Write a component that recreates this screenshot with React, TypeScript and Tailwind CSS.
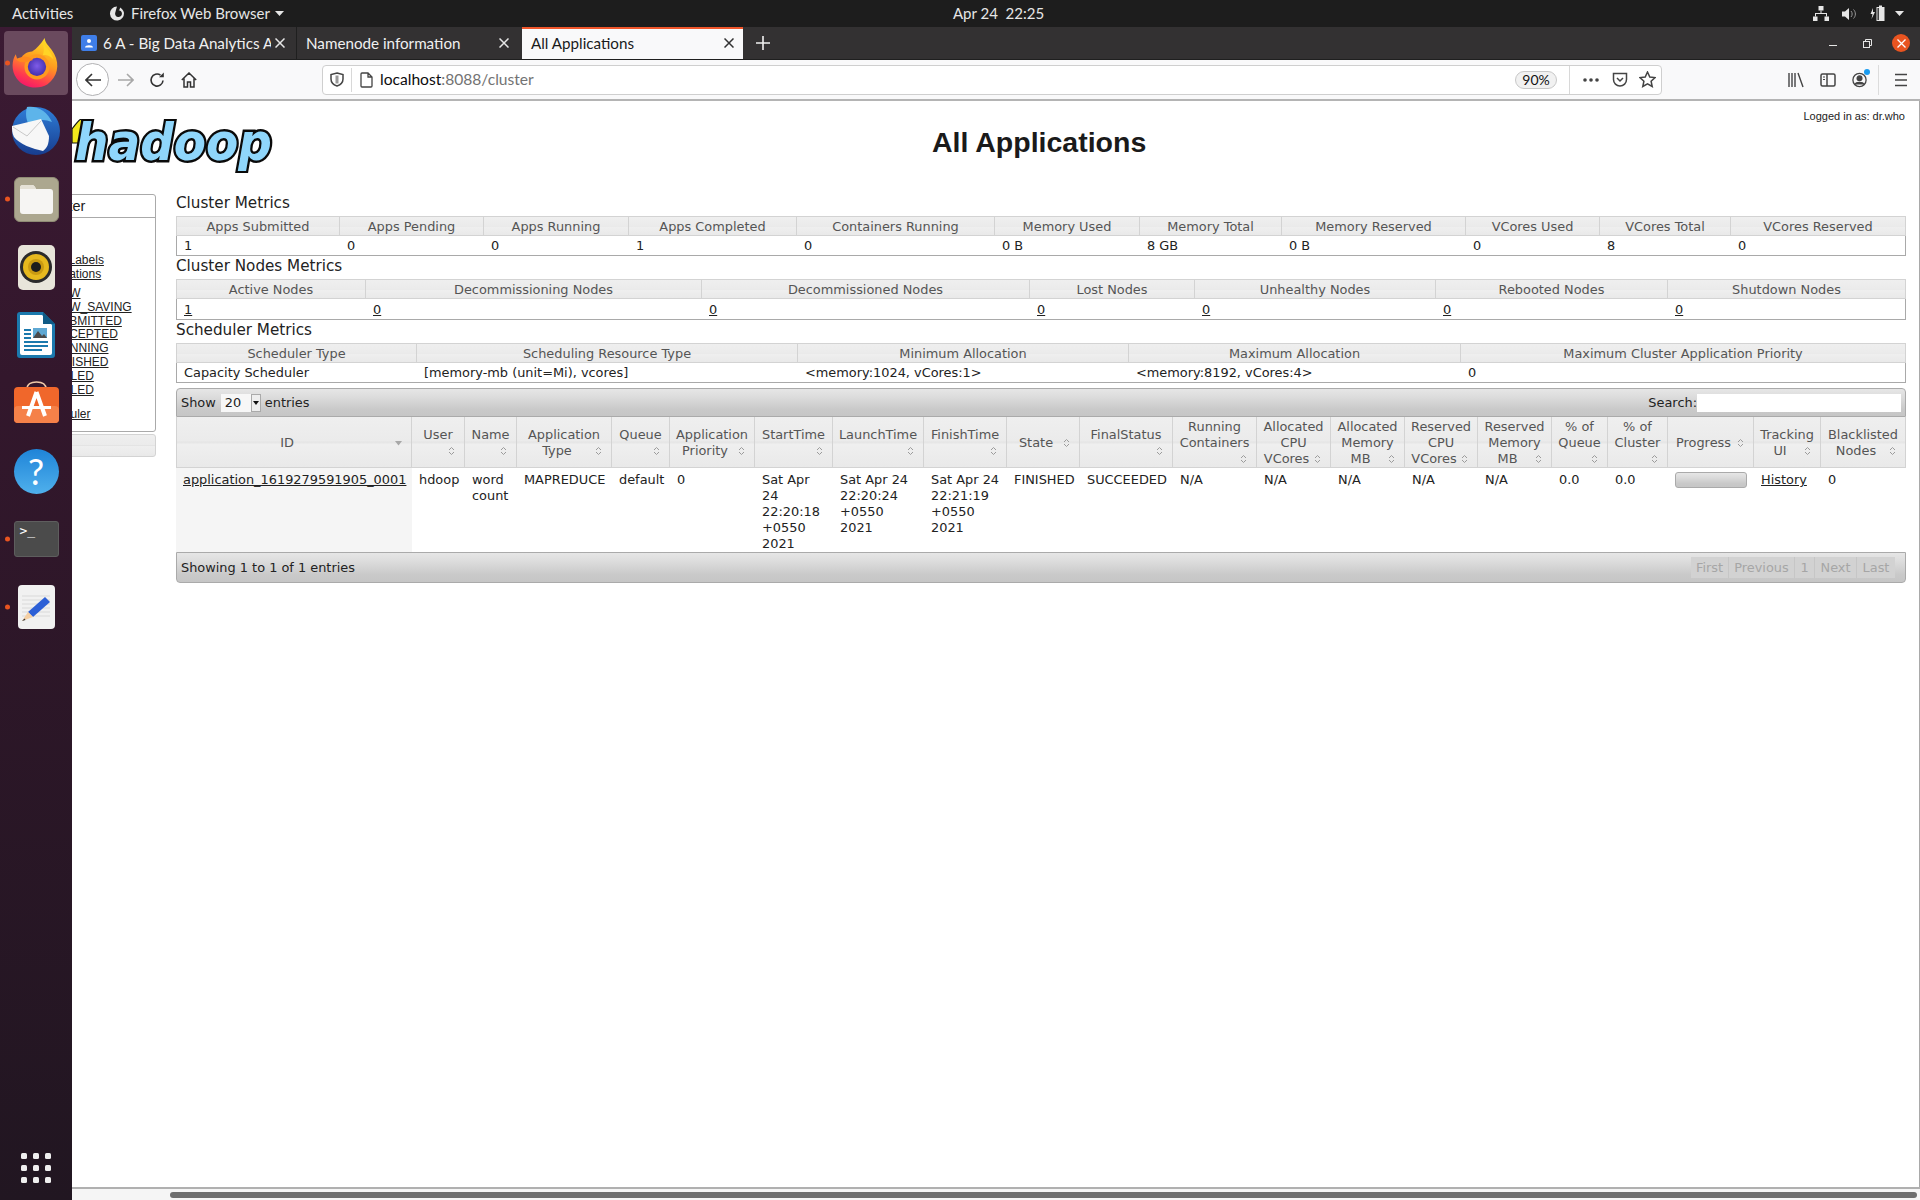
import React from "react";

const UI = "font-['Lato','Noto_Sans',sans-serif]";
const DJ = "font-['DejaVu_Sans',sans-serif]";
const LS = "font-['Liberation_Sans',Arial,sans-serif]";

const thBg = "bg-[linear-gradient(#efefef_0%,#ebebeb_48%,#e4e4e4_50%,#efefef_55%,#e9e9e9_100%)]";
const barBg = "bg-[linear-gradient(#e6e6e6_0%,#dcdcdc_30%,#c9c9c9_75%,#c6c6c6_100%)]";

function Sort() {
  return (
    <svg width="7" height="10" viewBox="0 0 7 10" className="block" fill="none" stroke="#9b9b9b" strokeWidth="1">
      <path d="M1 4 L3.5 1.5 L6 4" />
      <path d="M1 6 L3.5 8.5 L6 6" />
    </svg>
  );
}

function FirefoxIcon({ size = 56 }: { size?: number }) {
  return (
    <svg width={size} height={size} viewBox="0 0 56 56">
      <defs>
        <linearGradient id="ffa" x1="0.7" y1="0" x2="0.3" y2="1">
          <stop offset="0" stopColor="#ffe226" />
          <stop offset="0.45" stopColor="#ff9a1f" />
          <stop offset="0.8" stopColor="#ff3a4f" />
          <stop offset="1" stopColor="#f5156c" />
        </linearGradient>
        <radialGradient id="ffb" cx="0.5" cy="0.45" r="0.6">
          <stop offset="0" stopColor="#7f5ce8" />
          <stop offset="1" stopColor="#3f2ba8" />
        </radialGradient>
      </defs>
      <path d="M37 2 C37 8 44 12 47 19 C53 30 50 43 40 50 C30 56 15 54 8 44 C2 36 3 25 7 19 C8 23 9 25 11 26 C13 20 18 16 24 16 C29 13 33 8 37 2Z" fill="url(#ffa)" />
      <circle cx="29" cy="32" r="13" fill="#ff9a1f" />
      <circle cx="29" cy="32" r="9.5" fill="url(#ffb)" />
      <path d="M7 24 C13 21 20 20 25 25 C20 26 17 28 15 27 C12 27 9 26 7 24Z" fill="#ff8a1f" />
      <path d="M35 7 C38 12 44 16 46 24 C42 20 38 19 35 20 C37 15 36 11 35 7Z" fill="#ffd426" />
    </svg>
  );
}

function Thunderbird() {
  return (
    <svg width="50" height="50" viewBox="0 0 50 50">
      <defs>
        <linearGradient id="tb" x1="0" y1="0" x2="0" y2="1">
          <stop offset="0" stopColor="#2f7ed8" />
          <stop offset="1" stopColor="#173d8f" />
        </linearGradient>
      </defs>
      <circle cx="25" cy="25" r="24" fill="url(#tb)" />
      <path d="M16 1 C26 -1 37 6 41 16 C32 12 23 14 19 20 C15 15 14 8 16 1Z" fill="#5db4ea" />
      <path d="M1 20 L30 13 L38 30 C38 38 36 42 32 45 C22 43 8 38 3 31 C1 27 1 24 1 20Z" fill="#f7f7f7" />
      <path d="M2 21 L16 30 L30 15" fill="none" stroke="#c9c9c9" strokeWidth="1" />
    </svg>
  );
}

function Files() {
  return (
    <div className="w-[45px] h-[45px] rounded-[6px] bg-[#aca78f] border border-[#8f8b75] flex items-center justify-center">
      <svg width="33" height="29" viewBox="0 0 33 29">
        <path d="M0 3 Q0 0 3 0 H12 Q14 0 15 2 L16 4 H30 Q33 4 33 7 V26 Q33 29 30 29 H3 Q0 29 0 26Z" fill="#f6f5f3" />
        <path d="M0 3 Q0 0 3 0 H12 Q14 0 15 2 L16 4 H0Z" fill="#e5e1d6" />
      </svg>
    </div>
  );
}

function Rhythmbox() {
  return (
    <div className="w-[37px] h-[45px] rounded-[5px] bg-[#e8e5da] flex items-center justify-center">
      <svg width="32" height="32" viewBox="0 0 32 32">
        <circle cx="16" cy="16" r="16" fill="#2b2b2b" />
        <circle cx="16" cy="16" r="13" fill="#e6b91e" />
        <circle cx="16" cy="16" r="8" fill="#c99a12" />
        <circle cx="16" cy="16" r="5" fill="#1d1d1d" />
      </svg>
    </div>
  );
}

function Writer() {
  return (
    <svg width="38" height="46" viewBox="0 0 38 46">
      <path d="M3 0 H26 L38 12 V43 Q38 46 35 46 H3 Q0 46 0 43 V3 Q0 0 3 0Z" fill="#1b79ad" />
      <path d="M3 3 H25 L35 13 V41 Q35 43 33 43 H5 Q3 43 3 41Z" fill="#fff" />
      <path d="M26 0 L38 12 H26Z" fill="#0f5a85" />
      <rect x="7" y="17" width="7" height="2" fill="#1b79ad" />
      <rect x="7" y="21" width="7" height="2" fill="#1b79ad" />
      <rect x="7" y="25" width="7" height="2" fill="#1b79ad" />
      <rect x="16" y="16" width="14" height="10" fill="#5fa8d3" />
      <path d="M16 26 L21 19 L25 24 L27 22 L30 26Z" fill="#4a4a4a" />
      <rect x="7" y="29" width="24" height="2" fill="#1b79ad" />
      <rect x="7" y="33" width="24" height="2" fill="#1b79ad" />
      <rect x="7" y="37" width="18" height="2" fill="#1b79ad" />
    </svg>
  );
}

function Software() {
  return (
    <svg width="45" height="42" viewBox="0 0 45 42" className="block mb-[3px]">
      <path d="M13 8 C13 3 17 1 22.5 1 C28 1 32 3 32 8" fill="none" stroke="#f0c9a8" strokeWidth="1.6" />
      <rect x="0" y="6" width="45" height="36" rx="4" fill="#f0672b" />
      <rect x="0" y="25" width="45" height="17" rx="4" fill="#f58149" />
      <path d="M22.5 11 L14 35 M22.5 11 L31 35" stroke="#fff" strokeWidth="4" fill="none" />
      <rect x="8" y="25" width="29" height="3" fill="#fff" />
    </svg>
  );
}

function Editor() {
  return (
    <div className="w-[37px] h-[44px] rounded-[4px] bg-[#f1f1f1] flex items-center justify-center">
      <svg width="30" height="32" viewBox="0 0 30 32">
        <path d="M1 5H29M1 9H29M1 13H29M1 17H29M1 21H29M1 25H29" stroke="#cfcfcf" strokeWidth="0.7" />
        <path d="M7 21 L24 6 L29 11 L12 26Z" fill="#2c5fd6" />
        <path d="M7 21 L12 26 L1 30Z" fill="#f4cfa4" />
        <path d="M1 30 L3.5 27.5 L4.5 29Z" fill="#333" />
      </svg>
    </div>
  );
}

function Dot() {
  return <span className="w-[5px] h-[5px] rounded-full bg-[#e95420] block" />;
}

function DockItem({ dot, active, children }: { dot?: boolean; active?: boolean; children: React.ReactNode }) {
  return (
    <div className="relative flex items-center justify-center w-[72px] h-[68px]">
      {active && <div className="absolute left-[4px] top-[2px] bottom-[2px] w-[64px] rounded-[4px] bg-[#6a4a5e]" />}
      {dot && (
        <div className="absolute left-[4.5px] top-1/2 -translate-y-1/2">
          <Dot />
        </div>
      )}
      <div className="relative">{children}</div>
    </div>
  );
}

function Dock() {
  return (
    <aside className="w-[72px] shrink-0 z-10 flex flex-col bg-[linear-gradient(#3b1a33,#33172c_30%,#211621)]">
      <div className="h-[2px]" />
      <DockItem dot active>
        <FirefoxIcon size={54} />
      </DockItem>
      <DockItem>
        <Thunderbird />
      </DockItem>
      <DockItem dot>
        <Files />
      </DockItem>
      <DockItem>
        <Rhythmbox />
      </DockItem>
      <DockItem>
        <Writer />
      </DockItem>
      <DockItem>
        <Software />
      </DockItem>
      <DockItem>
        <div className={`w-[45px] h-[45px] rounded-full bg-[linear-gradient(#1f84d8,#4fb0ec)] flex items-center justify-center text-white text-[36px] leading-none ${UI}`}>?</div>
      </DockItem>
      <DockItem dot>
        <div className="w-[45px] h-[36px] rounded-[3px] bg-[#4b4b4b] border border-[#5e5e5e] pl-[5px] pt-[1px] text-white text-[13px] leading-[15px] font-['DejaVu_Sans_Mono',monospace]">&gt;_</div>
      </DockItem>
      <DockItem dot>
        <Editor />
      </DockItem>
      <div className="flex-1" />
      <div className="h-[56px] flex items-start justify-center pt-[9px]">
        <div className="grid grid-cols-3 gap-x-[6px] gap-y-[6px]">
          {Array.from({ length: 9 }).map((_, i) => (
            <span key={i} className="w-[6px] h-[6px] rounded-[1.5px] bg-[#efefef] block" />
          ))}
        </div>
      </div>
    </aside>
  );
}

function TopBar() {
  return (
    <div className={`h-[27px] shrink-0 bg-[#1d1d1d] text-[#e6e6e6] flex items-center text-[15px] ${UI}`}>
      <span className="ml-[12px] w-[97px]">Activities</span>
      <svg width="16" height="17" viewBox="0 0 16 17" className="shrink-0">
        <path d="M8 1.5 A7 7 0 1 0 14.8 7 C14 4.5 12.5 3.5 11 2.5 C11 4 10.5 5 9.5 5.3 A3.4 3.4 0 1 1 6.2 8 C7 5 7.5 3 8 1.5Z" fill="#e6e6e6" />
      </svg>
      <span className="ml-[6px] w-[144px]">Firefox Web Browser</span>
      <svg width="9" height="5" viewBox="0 0 9 5"><path d="M0 0H9L4.5 5Z" fill="#e6e6e6" /></svg>
      <span className="ml-[669px] w-[90px] text-center whitespace-pre">Apr 24  22:25</span>
      <div className="flex-1" />
      <svg width="16" height="15" viewBox="0 0 16 15" className="mr-[13px]" fill="#e6e6e6">
        <rect x="5.5" y="0" width="5" height="4.5" />
        <rect x="0" y="10.5" width="4.5" height="4.5" />
        <rect x="11.5" y="10.5" width="4.5" height="4.5" />
        <path d="M7.5 4.5H8.5V7H14V10.5H13V8H3V10.5H2V7H7.5Z" />
      </svg>
      <svg width="15" height="14" viewBox="0 0 15 14" className="mr-[13px]" fill="#e6e6e6">
        <path d="M0 4.5H3L7 1V13L3 9.5H0Z" />
        <path d="M9 4C10.5 5.5 10.5 8.5 9 10M11.5 2.5C14 5 14 9 11.5 11.5" stroke="#999" fill="none" strokeWidth="1" />
      </svg>
      <svg width="15" height="17" viewBox="0 0 15 17" className="mr-[10px]">
        <path d="M3 3 L0.5 9H2.5L1.5 14 L5 7H3Z" fill="#e6e6e6" />
        <rect x="6.5" y="2" width="8" height="14" fill="#e6e6e6" />
        <rect x="9" y="0.5" width="3" height="1.5" fill="#e6e6e6" />
        <rect x="7.5" y="3" width="1.3" height="12" fill="#1d1d1d" />
      </svg>
      <svg width="9" height="5" viewBox="0 0 9 5" className="mr-[16px]"><path d="M0 0H9L4.5 5Z" fill="#e6e6e6" /></svg>
    </div>
  );
}

function X({ color = "#e6e6e6" }: { color?: string }) {
  return (
    <svg width="10" height="10" viewBox="0 0 10 10" className="shrink-0">
      <path d="M0.5 0.5L9.5 9.5M9.5 0.5L0.5 9.5" stroke={color} strokeWidth="1.5" />
    </svg>
  );
}

function TabBar() {
  return (
    <div className={`h-[33px] shrink-0 bg-[#333132] flex text-[15.2px] text-[#f0f0f0] border-b border-[#1f1f1f] ${UI}`}>
      <div className="w-[225px] flex items-center border-r border-[#1f1f1f] pl-[9px] pr-[11px]">
        <span className="w-[16px] h-[16px] rounded-[2px] bg-[#3f7ee8] flex items-center justify-center shrink-0">
          <svg width="10" height="10" viewBox="0 0 10 10"><circle cx="5" cy="3" r="2" fill="#fff" /><path d="M1 9.5 C1 6.5 9 6.5 9 9.5Z" fill="#fff" /></svg>
        </span>
        <span className="ml-[6px] mr-[4px] flex-1 whitespace-nowrap overflow-hidden">6 A - Big Data Analytics A</span>
        <X />
      </div>
      <div className="w-[225px] flex items-center pl-[9px] pr-[13px]">
        <span className="flex-1 whitespace-nowrap">Namenode information</span>
        <X />
      </div>
      <div className="w-[221px] flex items-center bg-[#f9f9fa] text-[#1a1a1a] border-t-2 border-[#f0562b] pl-[9px] pr-[9px] pb-[2px]">
        <span className="flex-1 whitespace-nowrap">All Applications</span>
        <X color="#333" />
      </div>
      <svg width="14" height="14" viewBox="0 0 14 14" className="ml-[13px] self-center">
        <path d="M7 0V14M0 7H14" stroke="#f0f0f0" strokeWidth="1.6" />
      </svg>
      <div className="flex-1" />
      <div className="flex items-center">
        <span className="w-[8px] h-[1.5px] bg-[#e6e6e6] mt-[5px] block" />
        <svg width="9" height="9" viewBox="0 0 9 9" className="ml-[26px]" fill="none" stroke="#e6e6e6" strokeWidth="1">
          <rect x="0.5" y="2.5" width="6" height="6" />
          <path d="M2.5 2.5V0.5H8.5V6.5H6.5" />
        </svg>
        <span className="ml-[20px] mr-[10px] w-[18px] h-[18px] rounded-full bg-[#e95420] flex items-center justify-center">
          <svg width="9" height="9" viewBox="0 0 9 9"><path d="M0.5 0.5L8.5 8.5M8.5 0.5L0.5 8.5" stroke="#fff" strokeWidth="1.3" /></svg>
        </span>
      </div>
    </div>
  );
}

function Toolbar() {
  return (
    <div className={`h-[41px] shrink-0 bg-[#f9f9fa] border-b-2 border-[#b4b4b4] flex items-center ${UI}`}>
      <div className="ml-[4px] w-[33px] h-[33px] rounded-full border border-[#b1b1b3] bg-white flex items-center justify-center shrink-0">
        <svg width="16" height="14" viewBox="0 0 16 14" fill="none" stroke="#333" strokeWidth="1.6"><path d="M16 7H1.5M7 1L1 7L7 13" /></svg>
      </div>
      <svg width="16" height="14" viewBox="0 0 16 14" fill="none" stroke="#a8a8a8" strokeWidth="1.6" className="ml-[9px] shrink-0"><path d="M0 7H14.5M9 1L15 7L9 13" /></svg>
      <svg width="16" height="16" viewBox="0 0 16 16" fill="none" stroke="#333" strokeWidth="1.6" className="ml-[15px] shrink-0">
        <path d="M14 8.5A6 6 0 1 1 11.5 3.2" />
        <path d="M10 5.2H14.8V0.5Z" fill="#333" stroke="none" />
      </svg>
      <svg width="16" height="16" viewBox="0 0 16 16" fill="none" stroke="#333" strokeWidth="1.5" className="ml-[16px] shrink-0">
        <path d="M0.8 8L8 1L15.2 8M3 6.5V15H6.5V10H9.5V15H13V6.5" />
      </svg>
      <div className="ml-[125px] flex-1 min-w-0 h-[30px] rounded-[4px] bg-white border border-[#cfcfcf] flex items-center">
        <svg width="14" height="15" viewBox="0 0 14 15" className="ml-[7px] shrink-0" fill="none" stroke="#444" strokeWidth="1.5">
          <path d="M7 1 L13 2.5 V7 C13 11 10 13 7 14 C4 13 1 11 1 7 V2.5Z" />
          <path d="M7 3.5V11.5" stroke="#999" strokeWidth="3" />
        </svg>
        <span className="ml-[7px] w-px h-[24px] bg-[#d8d8d8] shrink-0" />
        <svg width="13" height="16" viewBox="0 0 13 16" className="ml-[8px] shrink-0" fill="none" stroke="#444" strokeWidth="1.3">
          <path d="M2 1H8L12 5V14Q12 15 11 15H2Q1 15 1 14V2Q1 1 2 1ZM8 1V5H12" />
        </svg>
        <span className="ml-[7px] text-[15.6px] text-[#0c0c0d] whitespace-nowrap">localhost<span className="text-[#737373]">:8088/cluster</span></span>
        <div className="flex-1" />
        <span className="w-[42px] h-[18px] rounded-full bg-[#f1f1f1] border border-[#c8c8c8] text-[14px] leading-[16px] text-center text-[#111]">90%</span>
        <span className="ml-[12px] w-px h-[28px] bg-[#d8d8d8] shrink-0" />
        <svg width="16" height="4" viewBox="0 0 16 4" className="ml-[13px]" fill="#444"><circle cx="2" cy="2" r="1.8" /><circle cx="8" cy="2" r="1.8" /><circle cx="14" cy="2" r="1.8" /></svg>
        <svg width="16" height="16" viewBox="0 0 16 16" className="ml-[13px]" fill="none" stroke="#444" strokeWidth="1.5">
          <path d="M1.5 1.5H14.5V7.5A6.5 6.5 0 0 1 1.5 7.5Z" />
          <path d="M5 6L8 9L11 6" />
        </svg>
        <svg width="17" height="17" viewBox="0 0 17 17" className="ml-[11px] mr-[5px]" fill="none" stroke="#444" strokeWidth="1.5">
          <path d="M8.5 1L10.8 6L16 6.6L12.1 10.2L13.2 15.5L8.5 12.8L3.8 15.5L4.9 10.2L1 6.6L6.2 6Z" />
        </svg>
      </div>
      <div className="flex items-center ml-[126px] shrink-0">
        <svg width="16" height="16" viewBox="0 0 16 16" fill="none" stroke="#444" strokeWidth="1.4"><path d="M1 1V15M4 1V15M7 1V15M10 1L15 15" /></svg>
        <svg width="16" height="14" viewBox="0 0 16 14" fill="none" stroke="#444" strokeWidth="1.5" className="ml-[16px]"><rect x="1" y="1" width="14" height="12" rx="1.5" /><path d="M7 1V13" /><path d="M3 4H5M3 6.5H5" strokeWidth="1" /></svg>
        <span className="relative ml-[16px] block w-[15px] h-[16px]">
          <svg width="15" height="16" viewBox="0 0 15 16" fill="none" stroke="#444" strokeWidth="1.3"><circle cx="7.5" cy="8" r="6.6" /><circle cx="7.5" cy="6.3" r="2.4" fill="#444" /><path d="M3 12.5C4 9.8 11 9.8 12 12.5" fill="#444" /></svg>
          <span className="absolute -top-[3px] -right-[3px] w-[6px] h-[6px] rounded-full bg-[#1a9cf0]" />
        </span>
        <span className="ml-[11px] w-px h-[30px] bg-[#dcdcdc]" />
        <svg width="12" height="14" viewBox="0 0 12 14" stroke="#444" strokeWidth="1.6" className="ml-[16px] mr-[13px]"><path d="M0 1.5H12M0 7H12M0 12.5H12" /></svg>
      </div>
    </div>
  );
}

function HadoopLogo() {
  return (
    <svg width="205" height="54" viewBox="0 0 205 54" className="block">
      <path d="M0 10 C3 6 7 1 9 0 C10 3 12 3 13 1 C12 6 10 16 7 24 L0 24Z" fill="#f2e71c" stroke="#111" strokeWidth="1.2" />
      <text x="3" y="41" fontFamily="'DejaVu Sans','Liberation Sans',sans-serif" fontStyle="italic" fontWeight="700" fontSize="51" textLength="197" lengthAdjust="spacingAndGlyphs" fill="#8fd6fb" stroke="#0a0a0a" strokeWidth="5" paintOrder="stroke" strokeLinejoin="miter">hadoop</text>
    </svg>
  );
}

type Metric = { cols: number[]; head: string[]; cells: string[]; link?: boolean; bodyH: string };

function MetricTable({ cols, head, cells, link, bodyH }: Metric) {
  return (
    <table className={`table-fixed w-[1730px] border-separate border-spacing-0 text-[12.9px] leading-[16px] ${DJ}`}>
      <colgroup>
        {cols.map((w, i) => (
          <col key={i} style={{ width: w }} />
        ))}
      </colgroup>
      <thead>
        <tr>
          {head.map((h, i) => (
            <th key={i} className={`h-[20px] p-0 pt-[1px] font-normal text-center text-[#555] border-t border-b border-r border-[#d3d3d3] ${i === 0 ? "border-l" : ""} ${thBg}`}>
              {h}
            </th>
          ))}
        </tr>
      </thead>
      <tbody>
        <tr>
          {cells.map((c, i) => (
            <td
              key={i}
              className={`${bodyH} p-0 pt-[1px] pl-[7px] text-[#222] border-b border-[#a9a9a9] ${i === 0 ? "border-l" : ""} ${i === cells.length - 1 ? "border-r" : ""}`}
            >
              {link ? <a className="underline">{c}</a> : c}
            </td>
          ))}
        </tr>
      </tbody>
    </table>
  );
}

const mainCols = [236, 53, 52, 95, 58, 85, 78, 91, 83, 73, 93, 84, 74, 74, 73, 74, 56, 60, 86, 67, 85];

type Head = { lines: string[]; iconLine: number };
const mainHead: Head[] = [
  { lines: ["ID"], iconLine: 0 },
  { lines: ["User", ""], iconLine: 1 },
  { lines: ["Name", ""], iconLine: 1 },
  { lines: ["Application", "Type"], iconLine: 1 },
  { lines: ["Queue", ""], iconLine: 1 },
  { lines: ["Application", "Priority"], iconLine: 1 },
  { lines: ["StartTime", ""], iconLine: 1 },
  { lines: ["LaunchTime", ""], iconLine: 1 },
  { lines: ["FinishTime", ""], iconLine: 1 },
  { lines: ["State"], iconLine: 0 },
  { lines: ["FinalStatus", ""], iconLine: 1 },
  { lines: ["Running", "Containers", ""], iconLine: 2 },
  { lines: ["Allocated", "CPU", "VCores"], iconLine: 2 },
  { lines: ["Allocated", "Memory", "MB"], iconLine: 2 },
  { lines: ["Reserved", "CPU", "VCores"], iconLine: 2 },
  { lines: ["Reserved", "Memory", "MB"], iconLine: 2 },
  { lines: ["% of", "Queue", ""], iconLine: 2 },
  { lines: ["% of", "Cluster", ""], iconLine: 2 },
  { lines: ["Progress"], iconLine: 0 },
  { lines: ["Tracking", "UI"], iconLine: 1 },
  { lines: ["Blacklisted", "Nodes"], iconLine: 1 },
];

function MainTable() {
  const row: React.ReactNode[] = [
    <a className="underline whitespace-nowrap">application_1619279591905_0001</a>,
    "hdoop",
    <>word<br />count</>,
    "MAPREDUCE",
    "default",
    "0",
    <>Sat Apr<br />24<br />22:20:18<br />+0550<br />2021</>,
    <>Sat Apr 24<br />22:20:24<br />+0550<br />2021</>,
    <>Sat Apr 24<br />22:21:19<br />+0550<br />2021</>,
    "FINISHED",
    "SUCCEEDED",
    "N/A",
    "N/A",
    "N/A",
    "N/A",
    "N/A",
    "0.0",
    "0.0",
    <div className={`w-[72px] h-[16px] rounded-[3px] border border-[#aaa] ${barBg}`} />,
    <a className="underline">History</a>,
    "0",
  ];
  return (
    <table className={`table-fixed w-[1730px] border-separate border-spacing-0 text-[12.9px] leading-[16px] ${DJ}`}>
      <colgroup>
        {mainCols.map((w, i) => (
          <col key={i} style={{ width: w }} />
        ))}
      </colgroup>
      <thead>
        <tr>
          {mainHead.map((h, i) => (
            <th key={i} className={`h-[51px] p-0 pt-[2px] font-normal text-[#555] align-middle border-r border-b border-[#d3d3d3] ${i === 0 ? "border-l" : ""} ${thBg}`}>
              <div className="flex flex-col">
                {h.lines.map((l, j) => (
                  <div key={j} className="relative h-[16px] text-center whitespace-nowrap">
                    <span className={j === h.iconLine && l ? "pr-[14px]" : ""}>{l}</span>
                    {j === h.iconLine && (
                      <span className="absolute right-[9px] top-[3px]">
                        {i === 0 ? (
                          <svg width="7" height="5" viewBox="0 0 7 5" className="mt-[3px]"><path d="M0 0H7L3.5 4.5Z" fill="#a8a8a8" /></svg>
                        ) : (
                          <Sort />
                        )}
                      </span>
                    )}
                  </div>
                ))}
              </div>
            </th>
          ))}
        </tr>
      </thead>
      <tbody>
        <tr>
          {row.map((c, i) => (
            <td key={i} className={`h-[84px] p-0 pt-[4px] pl-[7px] align-top text-[#222] ${i === 0 ? "bg-[#f5f5f5]" : ""}`}>
              {c}
            </td>
          ))}
        </tr>
      </tbody>
    </table>
  );
}

function Nav() {
  const s = "block underline text-[#222] whitespace-nowrap";
  return (
    <div className={`-ml-[60px] w-[144px] shrink-0 mt-[1px] text-[12px] leading-[13.8px] ${LS}`}>
      <div className="h-[238px] rounded-[3px] border border-[#aaa]">
        <div className="h-[23px] border-b border-[#aaa] pl-[26.5px] text-[14.5px] leading-[22px] text-[#222]">Cluster</div>
        <div className="pt-[36px] pl-[23.5px]">
          <a className={s}>Node Labels</a>
          <a className={s}>Applications</a>
          <div className="mt-[5.5px] pl-[16px]">
            <a className={s}>NEW</a>
            <a className={s}>NEW_SAVING</a>
            <a className={s}>SUBMITTED</a>
            <a className={s}>ACCEPTED</a>
            <a className={s}>RUNNING</a>
            <a className={s}>FINISHED</a>
            <a className={s}>FAILED</a>
            <a className={s}>KILLED</a>
          </div>
          <a className={`${s} mt-[11px]`}>Scheduler</a>
        </div>
      </div>
      <div className={`mt-[2px] h-[23px] rounded-[3px] border border-[#d3d3d3] ${thBg}`} />
    </div>
  );
}

function H3({ children }: { children: React.ReactNode }) {
  return <h3 className={`h-[23px] pt-[1px] text-[15.2px] leading-[18px] font-normal text-[#222] ${DJ}`}>{children}</h3>;
}

function Page() {
  return (
    <div className="relative flex-1 min-h-0 overflow-hidden bg-white border-r border-[#a9a9a9]">
      <div className={`absolute top-[7px] right-[14px] text-[11px] text-[#222] ${LS}`}>Logged in as: dr.who</div>
      <div className="h-[92px] flex items-start">
        <div className="mt-[18px]">
          <HadoopLogo />
        </div>
        <h1 className={`ml-[655px] mt-[24px] text-[28.5px] leading-[34px] font-bold text-[#1a1a1a] whitespace-nowrap ${LS}`}>All Applications</h1>
      </div>
      <div className="flex">
        <Nav />
        <div className="ml-[20px] w-[1730px] shrink-0">
          <H3>Cluster Metrics</H3>
          <MetricTable
            bodyH="h-[20px]"
            cols={[164, 144, 145, 168, 198, 145, 142, 184, 134, 131, 175]}
            head={["Apps Submitted", "Apps Pending", "Apps Running", "Apps Completed", "Containers Running", "Memory Used", "Memory Total", "Memory Reserved", "VCores Used", "VCores Total", "VCores Reserved"]}
            cells={["1", "0", "0", "1", "0", "0 B", "8 GB", "0 B", "0", "8", "0"]}
          />
          <H3>Cluster Nodes Metrics</H3>
          <MetricTable
            bodyH="h-[21px]"
            link
            cols={[190, 336, 328, 165, 241, 232, 238]}
            head={["Active Nodes", "Decommissioning Nodes", "Decommissioned Nodes", "Lost Nodes", "Unhealthy Nodes", "Rebooted Nodes", "Shutdown Nodes"]}
            cells={["1", "0", "0", "0", "0", "0", "0"]}
          />
          <H3>Scheduler Metrics</H3>
          <MetricTable
            bodyH="h-[20px]"
            cols={[241, 381, 331, 332, 445]}
            head={["Scheduler Type", "Scheduling Resource Type", "Minimum Allocation", "Maximum Allocation", "Maximum Cluster Application Priority"]}
            cells={["Capacity Scheduler", "[memory-mb (unit=Mi), vcores]", "<memory:1024, vCores:1>", "<memory:8192, vCores:4>", "0"]}
          />
          <div className={`mt-[5px] h-[29px] rounded-t-[4px] border border-[#aaa] flex items-center text-[12.9px] text-[#222] ${barBg} ${DJ}`}>
            <span className="ml-[4px]">Show</span>
            <span className="ml-[5px] w-[40px] h-[18px] bg-[#f7f7f7] flex items-center">
              <span className="pl-[4px] flex-1">20</span>
              <span className="w-[10px] h-[18px] border border-[#aaa] bg-[#eee] flex items-center justify-center">
                <svg width="6" height="4" viewBox="0 0 6 4"><path d="M0 0H6L3 4Z" fill="#111" /></svg>
              </span>
            </span>
            <span className="ml-[4px]">entries</span>
            <div className="flex-1" />
            <span>Search:</span>
            <span className="ml-0 mr-[4px] w-[204px] h-[18px] bg-white block" />
          </div>
          <MainTable />
          <div className={`h-[31px] rounded-b-[4px] border border-[#aaa] flex items-center text-[12.9px] text-[#222] ${barBg} ${DJ}`}>
            <span className="ml-[4px]">Showing 1 to 1 of 1 entries</span>
            <div className="flex-1" />
            <div className="mr-[10px] flex h-[21px] text-[#a6a6a6] bg-[#d2d2d2] leading-[21px]">
              <span className="w-[38px] text-center border-r border-[#c6c6c6]">First</span>
              <span className="w-[66px] text-center border-r border-[#c6c6c6]">Previous</span>
              <span className="w-[20px] text-center border-r border-[#c6c6c6]">1</span>
              <span className="w-[42px] text-center border-r border-[#c6c6c6]">Next</span>
              <span className="w-[38px] text-center">Last</span>
            </div>
          </div>
        </div>
      </div>
    </div>
  );
}

function HScroll() {
  return (
    <div className="h-[13px] shrink-0 bg-[#f5f5f5] border-t-2 border-[#b0b0b0] flex items-center">
      <div className="ml-[98px] flex-1 h-[6px] rounded-full bg-[#6e6e6e] mr-[3px]" />
    </div>
  );
}

export default function App() {
  return (
    <div className="w-[1920px] h-[1200px] flex flex-col overflow-hidden bg-white">
      <TopBar />
      <div className="flex flex-1 min-h-0">
        <Dock />
        <div className="flex-1 min-w-0 flex flex-col">
          <TabBar />
          <Toolbar />
          <Page />
          <HScroll />
        </div>
      </div>
    </div>
  );
}
